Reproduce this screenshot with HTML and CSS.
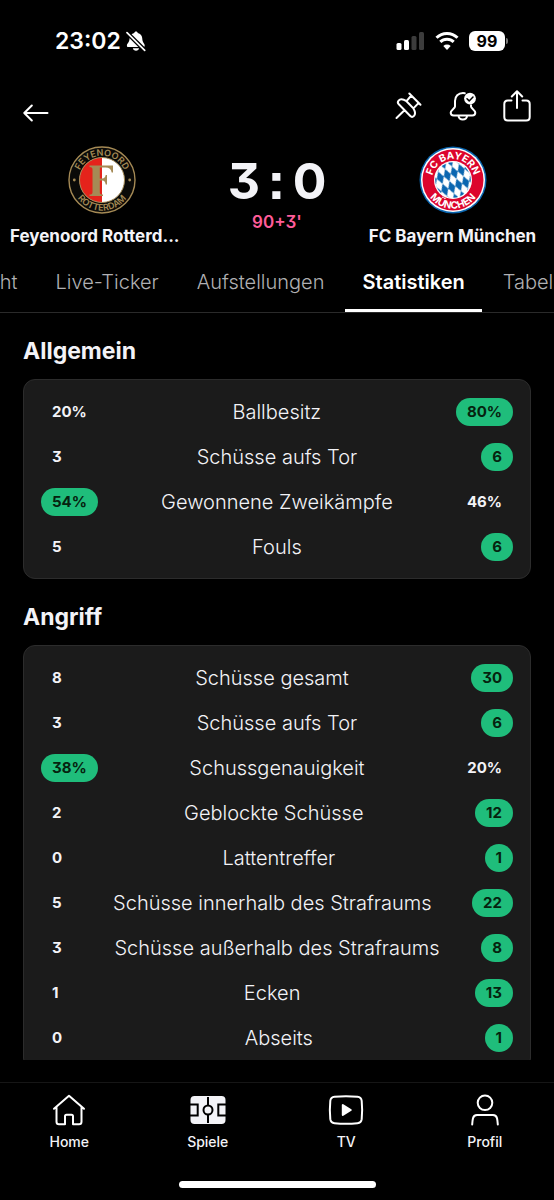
FILE: index.html
```
<!DOCTYPE html>
<html lang="de">
<head>
    <meta charset="utf-8">
    <meta name="viewport" content="width=device-width, initial-scale=1">
    <title>Feyenoord Rotterdam - FC Bayern München</title>
    <link rel="stylesheet" href="styles.css">
</head>
<body>

    <div class="status-bar">
      <div class="status-time">
        <span>23:02</span>
        <svg class="status-mute" viewBox="0 0 20 21" width="20" height="21">
          <path d="M10 .5c.9 0 1.6.6 1.7 1.4 2.8.7 4.6 2.9 4.6 5.9 0 3.7 2.4 4.6 2.4 6.900 0 .8-.5 1.300-1.400 1.300H2.300c-.9 0-1.400-.5-1.400-1.300 0-2.300 2.600-3.200 2.600-6.900 0-3 2-5.200 4.800-5.900C8.400 1.100 9.100.5 10 .5z" fill="#fff"/>
          <path d="M6.800 17.300h6.300c-.2 1.500-1.500 2.500-3.100 2.500s-2.900-1-3.200-2.500z" fill="#fff"/>
          <path d="M1 1.700 18.700 19.300" stroke="#000" stroke-width="4.400"/>
          <path d="M1 1.700 18.700 19.300" stroke="#fff" stroke-width="1.700" stroke-linecap="round"/>
        </svg>
      </div>
      <div class="status-icons">
        <svg viewBox="0 0 29 18" width="29" height="18">
          <rect x="0.500" y="11" width="5" height="7" rx="1.500" fill="#fff"/>
          <rect x="8" y="8" width="5" height="10" rx="1.500" fill="#fff"/>
          <rect x="15.500" y="4" width="5" height="14" rx="1.500" fill="#3c3c3c"/>
          <rect x="23" y="0" width="5" height="18" rx="1.500" fill="#3c3c3c"/>
        </svg>
        <svg viewBox="0 0 24 18" width="24" height="18">
          <path d="M1.500 5.800a15 15 0 0 1 21 0M5.300 9.900a9.600 9.600 0 0 1 13.400 0" fill="none" stroke="#fff" stroke-width="3"/>
          <path d="M12 18 8.300 14a5.500 5.500 0 0 1 7.400 0z" fill="#fff"/>
        </svg>
        <span class="battery"><span class="battery-level">99</span><span class="battery-tip"></span></span>
      </div>
    </div>

    <header class="top-bar">
      <button class="icon-button" aria-label="Zurück">
        <svg viewBox="0 0 26 18" width="26" height="18" class="line-icon">
          <path d="M24.500 9H1.500M8.800 1.500 1.300 9l7.500 7.500"/>
        </svg>
      </button>
      <div class="top-actions">
        <button class="icon-button" aria-label="Anheften">
          <svg viewBox="0 0 28 28" width="28" height="28" class="line-icon">
            <path d="M14.300 1.500 25.500 12.700M16.300 3.500l-4.800 5.700M23.700 10.900l-5.300 5.500M11.500 9.200C8 7 5 7 3.600 8.600c-1.200 1.400-.9 2.600.2 3.700l11.500 11.700c1.100 1.100 2.300 1.300 3.500.1 1.700-1.700 1.500-4.600-.4-7.700zM9.200 18.500 1.500 26"/>
          </svg>
        </button>
        <button class="icon-button" aria-label="Benachrichtigungen">
          <svg viewBox="0 0 28 30" width="28" height="30" class="line-icon">
            <path d="M15.800 2.200c-.6-.2-1.200-.2-1.800-.2-4.800 0-8 3.400-8 8v5.500c0 1.800-4.300 3.400-4.300 6.300 0 1.900 1.300 2.600 3 2.600h18.600c1.800 0 3-.7 3-2.600 0-2.900-4.300-4.500-4.300-6.300v-1.300M9.500 24.600c0 2.200 1.800 4 4.300 4s4.300-1.800 4.300-4"/>
            <circle cx="21" cy="7.600" r="5.900" fill="#fff" stroke="none"/>
            <path d="m18 7.700 2.200 2.200 3.800-3.900" stroke="#000" stroke-width="1.500"/>
          </svg>
        </button>
        <button class="icon-button" aria-label="Teilen">
          <svg viewBox="0 0 28 32" width="28" height="32" class="line-icon">
            <path d="M8.500 10.500H4.800c-2 0-3.500 1.500-3.500 3.500v13c0 2 1.500 3.500 3.500 3.500h18.400c2 0 3.500-1.500 3.500-3.500V14c0-2-1.500-3.500-3.500-3.500h-3.700M14 18V1.500M8.800 6.500 14 1.300l5.200 5.200"/>
          </svg>
        </button>
      </div>
    </header>

    <section class="match">
      <div class="team team-home">
        <svg viewBox="0 0 68 68" width="68" height="68" role="img" aria-label="Feyenoord">
          <defs>
            <path id="fey-top" d="M9.800 34a24.200 24.200 0 0 1 48.400 0"/>
            <path id="fey-bottom" d="M3.400 34a30.600 30.600 0 0 0 61.200 0"/>
          </defs>
          <circle cx="34" cy="34" r="33" fill="#0b0a08" stroke="#a58a55" stroke-width="1.400"/>
          <circle cx="34" cy="34" r="22.500" fill="#fff"/>
          <path d="M34 11.500a22.500 22.500 0 0 0 0 45z" fill="#e5231b"/>
          <circle cx="34" cy="34" r="22.500" fill="none" stroke="#a58a55" stroke-width="1"/>
          <path d="M21.500 19.500H45v7h-1.300c-.6-3.300-2.400-5-6.200-5h-5.700v11h2.400c2.200 0 3.100-1 3.500-3.400H39v9.300h-1.300c-.4-2.700-1.300-3.900-3.500-3.900h-2.400v11.800c0 1.700.8 2.200 3.200 2.300v1.500H21.500v-1.500c2.400-.1 3-.6 3-2.300V23.500c0-1.700-.6-2.300-3-2.500z" fill="#a58a55"/>
          <circle cx="6.300" cy="34" r="1.400" fill="#a58a55"/>
          <circle cx="61.700" cy="34" r="1.400" fill="#a58a55"/>
          <text class="crest-text crest-gold"><textPath href="#fey-top" startOffset="50%">FEYENOORD</textPath></text>
          <text class="crest-text crest-gold"><textPath href="#fey-bottom" startOffset="50%">ROTTERDAM</textPath></text>
        </svg>
        <span class="team-name">Feyenoord Rotterd...</span>
      </div>
      <div class="result">
        <p class="score"><span>3</span><span>:</span><span>0</span></p>
        <p class="minute">90+3'</p>
      </div>
      <div class="team">
        <svg viewBox="0 0 68 68" width="68" height="68" role="img" aria-label="FC Bayern">
          <defs>
            <path id="fcb-top" d="M13 34a21 21 0 0 1 42 0"/>
            <path id="fcb-bottom" d="M5.300 34a28.700 28.700 0 0 0 57.400 0"/>
            <pattern id="diamonds" width="7.400" height="13" patternUnits="userSpaceOnUse" patternTransform="translate(34 34) rotate(-20)">
              <path d="M3.700 0 7.400 6.500 3.700 13 0 6.500z" fill="#0a66b0"/>
            </pattern>
          </defs>
          <circle cx="34" cy="34" r="33.500" fill="#0a66b0"/>
          <circle cx="34" cy="34" r="32" fill="#fff"/>
          <circle cx="34" cy="34" r="30.500" fill="#dc052d"/>
          <circle cx="34" cy="34" r="19" fill="#fff"/>
          <circle cx="34" cy="34" r="17.800" fill="url(#diamonds)"/>
          <text class="crest-text crest-white"><textPath href="#fcb-top" startOffset="50%">FC BAYERN</textPath></text>
          <text class="crest-text crest-white"><textPath href="#fcb-bottom" startOffset="50%">MÜNCHEN</textPath></text>
        </svg>
        <span class="team-name">FC Bayern München</span>
      </div>
    </section>

    <nav class="tabs">
      <a href="#" class="tab">Übersicht</a>
      <a href="#" class="tab">Live-Ticker</a>
      <a href="#" class="tab">Aufstellungen</a>
      <a href="#" class="tab tab-active">Statistiken</a>
      <a href="#" class="tab">Tabelle</a>
    </nav>

    <main class="stats">
      <h2 class="stats-title">Allgemein</h2>
      <table class="stats-card">
        <tbody>
          <tr><td>20%</td><th scope="row">Ballbesitz</th><td class="best">80%</td></tr>
          <tr><td>3</td><th scope="row">Schüsse aufs Tor</th><td class="best">6</td></tr>
          <tr><td class="best">54%</td><th scope="row">Gewonnene Zweikämpfe</th><td>46%</td></tr>
          <tr><td>5</td><th scope="row">Fouls</th><td class="best">6</td></tr>
        </tbody>
      </table>

      <h2 class="stats-title">Angriff</h2>
      <table class="stats-card">
        <tbody>
          <tr><td>8</td><th scope="row">Schüsse gesamt</th><td class="best">30</td></tr>
          <tr><td>3</td><th scope="row">Schüsse aufs Tor</th><td class="best">6</td></tr>
          <tr><td class="best">38%</td><th scope="row">Schussgenauigkeit</th><td>20%</td></tr>
          <tr><td>2</td><th scope="row">Geblockte Schüsse</th><td class="best">12</td></tr>
          <tr><td>0</td><th scope="row">Lattentreffer</th><td class="best">1</td></tr>
          <tr><td>5</td><th scope="row">Schüsse innerhalb des Strafraums</th><td class="best">22</td></tr>
          <tr><td>3</td><th scope="row">Schüsse außerhalb des Strafraums</th><td class="best">8</td></tr>
          <tr><td>1</td><th scope="row">Ecken</th><td class="best">13</td></tr>
          <tr><td>0</td><th scope="row">Abseits</th><td class="best">1</td></tr>
        </tbody>
      </table>
    </main>

    <nav class="bottom-nav">
      <a href="#" class="nav-item">
        <svg viewBox="0 0 36 32" width="36" height="32" class="line-icon">
          <path d="M3 14.800 18 1.800l15 13M5.500 12.800v15c0 1.600.9 2.500 2.500 2.500h6v-8c0-1 .5-1.500 1.500-1.500h5c1 0 1.500.5 1.500 1.500v8h6c1.600 0 2.500-.9 2.500-2.500v-15"/>
        </svg>
        <span>Home</span>
      </a>
      <a href="#" class="nav-item">
        <svg viewBox="0 0 36 32" width="36" height="32">
          <rect x=".5" y="2" width="35" height="28" rx="4" fill="#f3f3f7"/>
          <path d="M0 10.500h7.700v11H0M36 10.500h-7.700v11H36M18 3v8.500M18 20.500V29" fill="none" stroke="#000" stroke-width="2"/>
          <circle cx="18" cy="16" r="4.500" fill="none" stroke="#000" stroke-width="2"/>
        </svg>
        <span>Spiele</span>
      </a>
      <a href="#" class="nav-item">
        <svg viewBox="0 0 36 32" width="36" height="32" class="line-icon">
          <path d="M6.500 2.800c7.500-.7 15.500-.7 23 0 2.500.2 3.900 1.600 4.200 4 .6 6 .6 12.400 0 18.400-.3 2.400-1.700 3.800-4.200 4-7.500.7-15.500.7-23 0-2.500-.2-3.900-1.600-4.200-4-.6-6-.6-12.400 0-18.400.3-2.400 1.700-3.800 4.200-4z"/>
          <path d="M14.800 11v10l8-5z" fill="#fff"/>
        </svg>
        <span>TV</span>
      </a>
      <a href="#" class="nav-item">
        <svg viewBox="0 0 36 32" width="36" height="32" class="line-icon">
          <circle cx="18" cy="8.800" r="7.300"/>
          <path d="M5.200 30.500c.2-2.300.3-4.200.8-6.200.5-2.200 1.700-3.300 4-3.300h16c2.300 0 3.500 1.100 4 3.300.5 2 .6 3.900.8 6.200"/>
        </svg>
        <span>Profil</span>
      </a>
    </nav>
    <div class="home-indicator"></div>

</body>
</html>
```
FILE: styles.css
```
* {
  box-sizing: border-box;
}

body {
  margin: 0;
  height: 100vh;
  display: flex;
  flex-direction: column;
  overflow: hidden;
  background-color: #000;
  color: #f3f3f7;
  font-family: Inter, sans-serif;
}

a {
  color: inherit;
  text-decoration: none;
}

.line-icon {
  fill: none;
  stroke: #fff;
  stroke-width: 2;
  stroke-linecap: round;
  stroke-linejoin: round;
}

/* Status bar */
.status-bar {
  display: flex;
  justify-content: space-between;
  align-items: center;
  height: 82px;
  flex-shrink: 0;
  padding: 0 46px 0 55px;
  color: #fff;
}

.status-time {
  display: flex;
  align-items: center;
  gap: 5px;
  font-size: 23px;
  font-weight: 600;
}

.status-icons {
  display: flex;
  align-items: center;
  gap: 10px;
}

.battery {
  display: flex;
  align-items: center;
  gap: 1px;
}

.battery-level {
  width: 36px;
  height: 20px;
  border-radius: 6px;
  background-color: #fff;
  color: #000;
  font-size: 16px;
  font-weight: 700;
  line-height: 20px;
  text-align: center;
}

.battery-tip {
  width: 2px;
  height: 6px;
  border-radius: 0 2px 2px 0;
  background-color: #777;
}

/* Top bar */
.top-bar {
  display: flex;
  justify-content: space-between;
  align-items: flex-end;
  height: 44px;
  flex-shrink: 0;
  padding: 0 23px;
}

.icon-button {
  display: flex;
  padding: 4px 0;
  border: none;
  background: none;
  cursor: pointer;
}

.top-actions {
  display: flex;
  align-items: center;
  gap: 26px;
}

/* Teams and score */
.match {
  display: grid;
  grid-template-columns: 1fr 168px 1fr;
  flex-shrink: 0;
  padding: 20px 10px 10px;
}

.team {
  display: flex;
  flex-direction: column;
  align-items: center;
  gap: 10px;
  min-width: 0;
}

.team-name {
  width: 100%;
  overflow: hidden;
  text-overflow: ellipsis;
  white-space: nowrap;
  font-size: 17px;
  font-weight: 700;
  line-height: 24px;
  text-align: center;
}

.team-home .team-name {
  text-align: left;
}

.result {
  display: flex;
  flex-direction: column;
  align-items: center;
}

.score {
  display: flex;
  gap: 8px;
  margin: 7px 0 0;
  font-size: 50px;
  font-weight: 700;
  line-height: 56px;
  font-feature-settings: "cv09", "ss07";
}

.minute {
  margin: 2px 0 0;
  color: #ff5c9a;
  font-size: 17px;
  font-weight: 600;
  line-height: 22px;
  font-feature-settings: "cv09";
}

.crest-text {
  font-family: Inter, sans-serif;
  text-anchor: middle;
}

.crest-gold {
  fill: #a58a55;
  font-size: 9px;
  font-weight: 600;
}

.crest-white {
  fill: #fff;
  font-size: 10px;
  font-weight: 700;
}

/* Tabs */
.tabs {
  display: flex;
  gap: 4px;
  flex-shrink: 0;
  overflow: hidden;
  border-bottom: 1px solid #2a2a2a;
}

.tab {
  padding: 12px 17px 15px;
  border-bottom: 3px solid transparent;
  color: #b0b0b3;
  font-size: 20px;
  font-weight: 300;
  line-height: 24px;
  white-space: nowrap;
}

/* the row is scrolled so the active tab is in view */
.tab:first-child {
  margin-left: -89px;
}

.tab-active {
  border-bottom-color: #fff;
  color: #fff;
  font-weight: 600;
}

/* Statistics */
.stats {
  flex: 1;
  min-height: 0;
  overflow: hidden;
  margin-bottom: 22px;
  padding: 0 23px;
}

.stats-title {
  margin: 24px 0 14px;
  font-size: 23px;
  font-weight: 700;
  line-height: 28px;
}

.stats-card {
  display: block;
  padding: 18px 17px 17px;
  border: 1px solid #2c2c2c;
  border-radius: 12px;
  background-color: #1b1b1b;
}

.stats-card tbody {
  display: flex;
  flex-direction: column;
  gap: 17px;
}

.stats-card tr {
  display: flex;
  justify-content: space-between;
}

.stats-card td {
  padding: 0 11px;
  border-radius: 14px;
  font-size: 15px;
  font-weight: 700;
  line-height: 28px;
  font-feature-settings: "cv09";
}

.stats-card th {
  padding: 0;
  font-size: 20px;
  font-weight: 300;
  line-height: 28px;
}

.stats-card .best {
  background-color: #1fbd7b;
  color: #06230f;
}

/* Bottom navigation */
.bottom-nav {
  display: flex;
  flex-shrink: 0;
  height: 99px;
  padding-top: 11px;
  border-top: 1px solid #161616;
}

.nav-item {
  flex: 1;
  display: flex;
  flex-direction: column;
  align-items: center;
  gap: 7px;
  font-size: 14px;
  font-weight: 500;
  line-height: 18px;
}

.home-indicator {
  width: 197px;
  height: 7px;
  flex-shrink: 0;
  margin: 0 auto 12px;
  border-radius: 4px;
  background-color: #fff;
}
```
